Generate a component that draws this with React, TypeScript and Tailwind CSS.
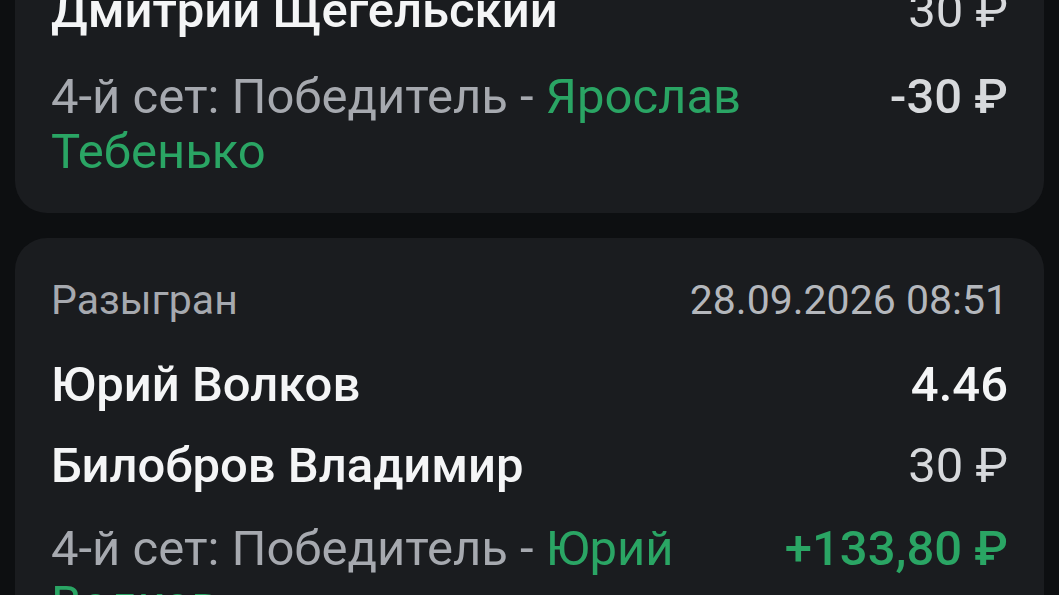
export default function App() {
  return (
    <div className="h-[595px] overflow-hidden bg-[#0d0f11]" style={{ fontFamily: 'Roboto, "Noto Sans", sans-serif' }}>
      <div className="-mt-[57px] flex flex-col gap-[25px] px-[15px]">
        {/* previous bet, scrolled partly out of view */}
        <div className="rounded-[32px] bg-[#1a1c1f] px-9 pt-[40px] pb-[34px]">
          <div className="flex items-baseline justify-between gap-6">
            <span className="text-[49px] leading-[56px] font-medium text-[#f4f5f6]">Дмитрий Щегельский</span>
            <span className="text-[49px] leading-[56px] text-[#d7d9dc] whitespace-nowrap">30 ₽</span>
          </div>
          <div className="mt-[30px] flex items-baseline justify-between gap-6">
            <p className="text-[49px] leading-[55px] text-[#a6a9af]">
              4-й сет: Победитель - <span className="text-[#2aa564]">Ярослав Тебенько</span>
            </p>
            <span className="text-[49px] leading-[55px] font-medium text-[#d7d9dc] whitespace-nowrap">-30 ₽</span>
          </div>
        </div>

        <div className="rounded-[32px] bg-[#1a1c1f] px-9 pt-[38px] pb-[34px]">
          <div className="flex items-baseline justify-between">
            <span className="text-[41px] leading-[48px] text-[#a6a9af]">Разыгран</span>
            <span className="text-[41px] leading-[48px] text-[#b4b7bc]">28.09.2026 08:51</span>
          </div>
          <div className="mt-[33px] flex items-baseline justify-between gap-6">
            <span className="text-[49px] leading-[56px] font-medium text-[#f4f5f6]">Юрий Волков</span>
            <span className="text-[49px] leading-[56px] font-medium text-[#f4f5f6]">4.46</span>
          </div>
          <div className="mt-[25px] flex items-baseline justify-between gap-6">
            <span className="text-[49px] leading-[56px] font-medium text-[#f4f5f6]">Билобров Владимир</span>
            <span className="text-[49px] leading-[56px] text-[#d7d9dc] whitespace-nowrap">30 ₽</span>
          </div>
          <div className="mt-[27px] flex items-baseline justify-between gap-6">
            <p className="text-[49px] leading-[55px] text-[#a6a9af]">
              4-й сет: Победитель - <span className="text-[#2aa564]">Юрий Волков</span>
            </p>
            <span className="text-[49px] leading-[55px] font-medium text-[#2aa564] whitespace-nowrap">+133,80 ₽</span>
          </div>
        </div>
      </div>
    </div>
  )
}
